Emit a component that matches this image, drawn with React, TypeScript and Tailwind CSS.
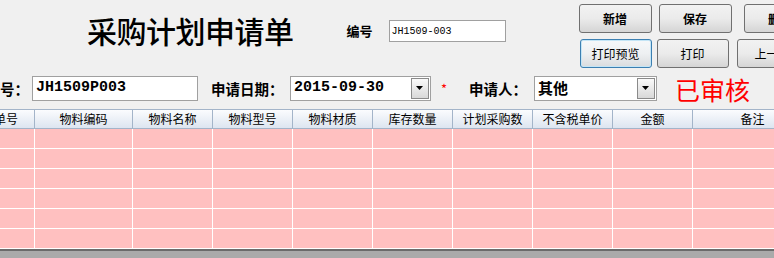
import React from 'react';

const cjk = "font-['Noto_Sans_CJK_SC',sans-serif]";
const mono = "font-['Liberation_Mono','Noto_Sans_CJK_SC',monospace]";

const columns = [
  { title: '申请单号', w: 'w-[81px]' },
  { title: '物料编码', w: 'w-[98px]' },
  { title: '物料名称', w: 'w-[80px]' },
  { title: '物料型号', w: 'w-[80px]' },
  { title: '物料材质', w: 'w-[80px]' },
  { title: '库存数量', w: 'w-[80px]' },
  { title: '计划采购数', w: 'w-[80px]' },
  { title: '不含税单价', w: 'w-[80px]' },
  { title: '金额', w: 'w-[80px]' },
  { title: '备注', w: 'w-[120px]' },
];

function Button({ label, bold, focused, w }: { label: string; bold?: boolean; focused?: boolean; w: string }) {
  return (
    <button
      className={`${w} h-[29px] shrink-0 rounded-[3px] border text-[12px] text-black ${cjk} ${
        bold ? 'font-bold' : ''
      } ${
        focused
          ? 'border-[#3c7fb1] bg-gradient-to-b from-[#f6f8fa] via-[#eef0f2] to-[#dadcde] shadow-[inset_0_0_0_1px_#c4e5f6]'
          : 'border-[#707070] bg-gradient-to-b from-[#f2f2f2] via-[#ebebeb] to-[#d5d5d5]'
      }`}
    >
      {label}
    </button>
  );
}

function DropArrow() {
  return (
    <div className="w-[18px] h-[21px] shrink-0 border border-[#8a8a8a] bg-gradient-to-b from-[#fafafa] to-[#d8d8d8] flex items-center justify-center">
      <svg width="8" height="5" viewBox="0 0 8 5">
        <path d="M0 0 H7 L3.5 4 Z" fill="#000" />
      </svg>
    </div>
  );
}

export default function App() {
  return (
    <div className={`w-[774px] h-[258px] bg-[#f0f0f0] overflow-hidden flex flex-col ${cjk}`}>
      {/* top area */}
      <div className="h-[76px] flex items-start shrink-0">
        <div className="ml-[87px] mt-[10px] shrink-0 text-[30px] leading-[40px] font-medium text-black tracking-[-0.5px]">
          采购计划申请单
        </div>
        <div className="ml-[53px] mt-[20px] h-[22px] flex items-center shrink-0">
          <span className="text-[13px] font-bold text-black w-[42px]">编号</span>
          <div className={`w-[117px] h-[22px] border border-[#a0a0a0] bg-white flex items-center pl-[2px] text-[10px] ${mono}`}>
            JH1509-003
          </div>
        </div>
        <div className="ml-[73px] mt-[4px] flex flex-col gap-[6px] shrink-0">
          <div className="flex gap-[7px]">
            <Button label="新增" bold w="w-[73px]" />
            <Button label="保存" bold w="w-[73px]" />
            <Button label="删除" bold w="w-[73px] ml-[5px]" />
          </div>
          <div className="flex gap-[5px] ml-[1px]">
            <Button label="打印预览" focused w="w-[72px]" />
            <Button label="打印" w="w-[72px]" />
            <Button label="上一条" w="w-[72px] ml-[3px]" />
          </div>
        </div>
      </div>

      {/* form row */}
      <div className="h-[25px] flex items-center shrink-0 text-[14.5px] font-bold text-black">
        <span className="w-[32px] shrink-0">号：</span>
        <div className={`w-[166px] h-[25px] border border-[#a0a0a0] bg-white flex items-center pl-[3px] text-[15px] font-bold ${mono}`}>
          JH1509P003
        </div>
        <span className="ml-[13px] w-[79px] shrink-0">申请日期：</span>
        <div className="w-[141px] h-[25px] border border-[#a0a0a0] bg-white flex items-center justify-between pl-[3px] pr-[1px] shrink-0">
          <span className={`text-[15px] font-bold ${mono}`}>2015-09-30</span>
          <DropArrow />
        </div>
        <span className="ml-[10px] w-[28px] text-[#ff0000] text-[13px] font-normal shrink-0">*</span>
        <span className="w-[65px] shrink-0">申请人：</span>
        <div className="w-[123px] h-[25px] border border-[#a0a0a0] bg-white flex items-center justify-between pl-[3px] pr-[1px] shrink-0">
          <span className="text-[15px] font-bold">其他</span>
          <DropArrow />
        </div>
        <span className="ml-[18px] text-[25px] leading-[26px] text-[#ff0000] font-normal shrink-0">已审核</span>
      </div>

      {/* grid */}
      <div className="mt-[8px] flex-1 flex flex-col overflow-hidden">
        <div className="-ml-[46px] flex flex-col">
          <div className="flex h-[20px] border-t border-b border-[#a3b4c9] bg-gradient-to-b from-[#fbfcfe] to-[#dde5f0]">
            {columns.map((c) => (
              <div
                key={c.title}
                className={`${c.w} shrink-0 border-r border-[#a3b4c9] flex items-center justify-center text-[12px] text-black leading-none`}
              >
                {c.title}
              </div>
            ))}
          </div>
          {[0, 1, 2, 3, 4, 5].map((r) => (
            <div key={r} className="flex h-[20px] border-b border-white bg-[#ffc0c0]">
              {columns.map((c) => (
                <div key={c.title} className={`${c.w} shrink-0 border-r border-white`} />
              ))}
            </div>
          ))}
        </div>
        <div className="h-[2px] bg-[#6b6b6b] shrink-0" />
        <div className="flex-1 bg-[#aaaaaa]" />
      </div>
    </div>
  );
}
